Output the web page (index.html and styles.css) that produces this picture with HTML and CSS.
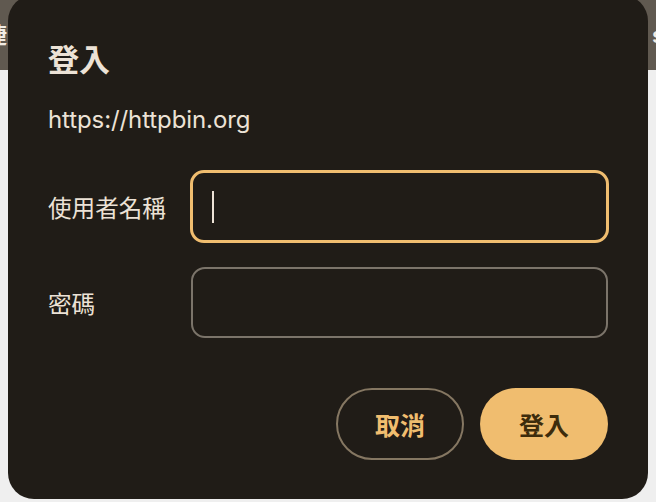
FILE: index.html
```html
<!DOCTYPE html>
<html lang="zh-Hant">
<head>
<meta charset="utf-8">
<link rel="stylesheet" href="styles.css">
</head>
<body>
<div class="page">
  <div class="topbar">
    <span class="tb-left">捷</span>
    <span class="tb-right">s</span>
  </div>
</div>
<div class="dialog">
  <h1 class="title">登入</h1>
  <div class="origin">https://httpbin.org</div>
  <div class="form">
    <label class="label">使用者名稱</label>
    <div class="field focused"><span class="caret"></span></div>
    <label class="label">密碼</label>
    <div class="field"></div>
  </div>
  <div class="actions">
    <button class="btn outline">取消</button>
    <button class="btn filled">登入</button>
  </div>
</div>
</body>
</html>
```
FILE: styles.css
```css
html, body {
  margin: 0;
  padding: 0;
  width: 656px;
  height: 502px;
  overflow: hidden;
  background: #efefef;
  font-family: "Inter", "Noto Sans CJK TC", sans-serif;
}
.page { height: 502px; }
.topbar {
  height: 70px;
  background: #605950;
  display: flex;
  justify-content: space-between;
  align-items: center;
  color: #f2ece4;
  font-size: 22px;
  font-weight: 600;
  font-family: "Noto Sans CJK TC", sans-serif;
}
.tb-left { margin-left: -15px; margin-top: -4px; }
.tb-right { margin-right: -8px; font-family: "Inter", sans-serif; }
.dialog {
  position: absolute;
  left: 8px;
  top: -5px;
  width: 640px;
  height: 504px;
  box-sizing: border-box;
  background: #201c17;
  border-radius: 26px;
  padding: 43px 40px 0 40px;
  color: #ece2d6;
}
.title {
  margin: 0;
  font-family: "Noto Sans CJK TC", sans-serif;
  font-size: 31px;
  font-weight: 700;
  line-height: 40px;
}
.origin {
  margin-top: 27px;
  font-size: 24px;
  line-height: 30px;
  color: #ece2d6;
  letter-spacing: -0.1px;
}
.form {
  margin-top: 35px;
  display: grid;
  grid-template-columns: 143px 1fr;
  row-gap: 24px;
  align-items: center;
}
.label {
  font-family: "Noto Sans CJK TC", sans-serif;
  font-size: 23.6px;
  color: #ece2d6;
}
.field {
  height: 71px;
  box-sizing: border-box;
  border: 2px solid #7b746a;
  border-radius: 14px;
  display: flex;
  align-items: center;
  padding-left: 19px;
}
.field.focused {
  border: 3px solid #f0bd6f;
  height: 73px;
  margin-left: -1px;
  margin-right: -1px;
}
.caret {
  width: 2px;
  height: 32px;
  background: #ece2d6;
}
.actions {
  margin-top: 50px;
  display: flex;
  justify-content: flex-end;
  gap: 16px;
}
.btn {
  width: 128px;
  height: 72px;
  border-radius: 36px;
  font-family: "Noto Sans CJK TC", sans-serif;
  font-size: 25px;
  font-weight: 700;
  box-sizing: border-box;
  cursor: pointer;
}
.btn.outline {
  background: transparent;
  border: 2px solid #857762;
  color: #f0bd6f;
}
.btn.filled {
  background: #f0bd6f;
  border: none;
  color: #3d2c0c;
}
```
